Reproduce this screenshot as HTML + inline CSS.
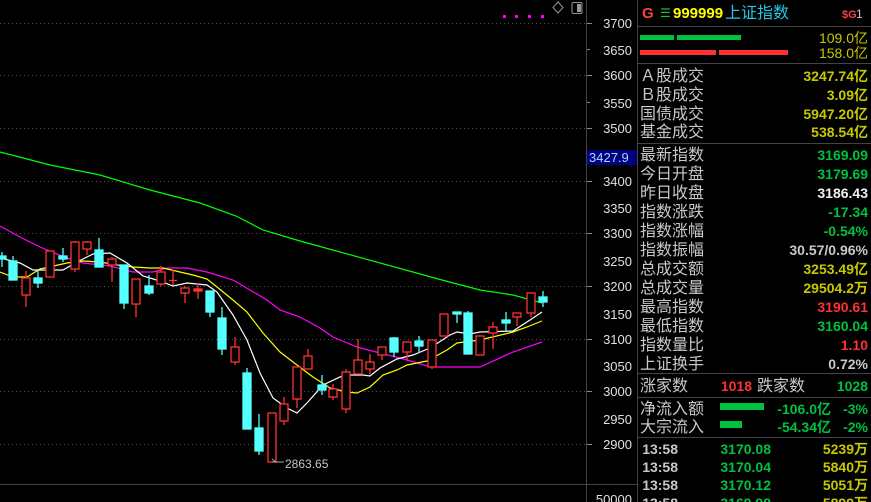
<!DOCTYPE html>
<html><head><meta charset="utf-8"><style>
html,body{margin:0;padding:0;background:#000;width:871px;height:502px;overflow:hidden}
svg{display:block}
text{font-family:"Liberation Sans","Noto Sans CJK SC",sans-serif}
.l{fill:#c8c8c8;font-size:16px}
.n{font-size:14px;font-weight:bold;text-anchor:end}
.ax{fill:#e0e0e0;font-size:13px;text-anchor:end}
</style></head><body>
<svg width="871" height="502" viewBox="0 0 871 502" xmlns="http://www.w3.org/2000/svg">
<rect width="871" height="502" fill="#000"/>
<!-- grid -->
<g stroke="#505050" stroke-dasharray="1 3" stroke-width="1">
<line x1="0" y1="23.5" x2="586" y2="23.5"/><line x1="0" y1="75.5" x2="586" y2="75.5"/>
<line x1="0" y1="128.5" x2="586" y2="128.5"/><line x1="0" y1="181.5" x2="586" y2="181.5"/>
<line x1="0" y1="233.5" x2="586" y2="233.5"/><line x1="0" y1="286.5" x2="586" y2="286.5"/>
<line x1="0" y1="339.5" x2="586" y2="339.5"/><line x1="0" y1="391.5" x2="586" y2="391.5"/>
<line x1="0" y1="444.5" x2="586" y2="444.5"/>
</g>
<g stroke="#444" stroke-width="1">
<line x1="586.5" y1="0" x2="586.5" y2="502"/>
<line x1="637.5" y1="0" x2="637.5" y2="502"/>
<line x1="0" y1="484.5" x2="637" y2="484.5"/>
<line x1="637" y1="26.5" x2="871" y2="26.5"/>
<line x1="637" y1="63.5" x2="871" y2="63.5"/>
<line x1="637" y1="143.5" x2="871" y2="143.5"/>
<line x1="637" y1="373.5" x2="871" y2="373.5"/>
<line x1="637" y1="397.5" x2="871" y2="397.5"/>
<line x1="637" y1="437.5" x2="871" y2="437.5"/>
</g>
<!-- axis ticks -->
<g stroke="#888"><line x1="587" y1="23.5" x2="592" y2="23.5"/><line x1="587" y1="49.5" x2="590" y2="49.5"/><line x1="587" y1="75.5" x2="592" y2="75.5"/><line x1="587" y1="102.5" x2="590" y2="102.5"/><line x1="587" y1="128.5" x2="592" y2="128.5"/><line x1="587" y1="181.5" x2="592" y2="181.5"/><line x1="587" y1="233.5" x2="592" y2="233.5"/><line x1="587" y1="286.5" x2="592" y2="286.5"/><line x1="587" y1="339.5" x2="592" y2="339.5"/><line x1="587" y1="391.5" x2="592" y2="391.5"/><line x1="587" y1="444.5" x2="592" y2="444.5"/></g>
<g class="ax">
<text x="632" y="28">3700</text><text x="632" y="55">3650</text><text x="632" y="80">3600</text><text x="632" y="108">3550</text><text x="632" y="133">3500</text>
<text x="632" y="186">3400</text><text x="632" y="213">3350</text><text x="632" y="238">3300</text><text x="632" y="266">3250</text><text x="632" y="291">3200</text><text x="632" y="319">3150</text><text x="632" y="344">3100</text><text x="632" y="371">3050</text><text x="632" y="396">3000</text><text x="632" y="424">2950</text><text x="632" y="449">2900</text><text x="632" y="504">50000</text>
</g>
<rect x="587" y="150" width="50" height="15" fill="#000080"/>
<text x="589" y="162" style="fill:#a0d8ff;font-size:13px">3427.9</text>
<!-- top icons -->
<g fill="#ff00ff"><rect x="503" y="15" width="3" height="3"/><rect x="515" y="15" width="3" height="3"/><rect x="528" y="15" width="3" height="3"/><rect x="541" y="15" width="3" height="3"/></g>
<path d="M558 2 L563 7.5 L558 13 L553 7.5 Z" fill="none" stroke="#999"/>
<rect x="572" y="2.5" width="10" height="11" rx="1.5" fill="none" stroke="#999"/><rect x="577" y="4" width="4" height="8" fill="#999"/>
<!-- MAs -->
<g fill="none" stroke-width="1.2">
<polyline stroke="#00ff00" points="0,152 50,165 100,175 150,190 200,203 236,216 263,230 300,241 442,280 480,290 513,295 542,303"/>
<polyline stroke="#ff00ff" points="0,226 20,237 40,247 67,258 83,263 110,266 133,272 153,272 167,268 187,268 207,272 233,280 267,300 280,310 300,317 320,328 333,337 357,347 380,353 407,360 427,366 437,367 480,367 513,352 542,342"/>
<polyline stroke="#ffff00" points="0,272 13,277 27,277 40,269 67,263 83,261 100,262 117,265 133,267 150,268 163,268 180,272 193,275 207,279 217,287 233,300 247,312 263,333 280,352 297,365 313,377 330,388 347,392 357,393 370,387 383,375 397,370 407,365 427,361 447,350 457,343 480,340 513,332 527,327 542,321"/>
<polyline stroke="#ffffff" points="0,258 20,263 33,270 63,270 77,262 93,254 110,253 127,263 143,276 160,281 173,286 187,283 207,285 217,292 233,315 247,340 260,373 273,398 287,408 297,413 307,403 323,385 340,377 347,375 363,375 370,376 380,368 397,359 413,355 430,348 450,335 457,332 470,334 480,332 513,331 530,320 542,312"/>
</g>
<!-- candles -->
<g stroke-width="1.3">
<g stroke="#54ffff" fill="#54ffff">
<line x1="2" y1="252" x2="2" y2="267"/><rect x="-2" y="256" width="8" height="3"/>
<line x1="13" y1="256" x2="13" y2="280"/><rect x="9" y="261" width="8" height="19"/>
<line x1="38" y1="271" x2="38" y2="288"/><rect x="34" y="278" width="8" height="5"/>
<line x1="63" y1="248" x2="63" y2="262"/><rect x="59" y="256" width="8" height="3"/>
<line x1="99" y1="238" x2="99" y2="267"/><rect x="95" y="250" width="8" height="17"/>
<line x1="124" y1="265" x2="124" y2="309"/><rect x="120" y="265" width="8" height="38"/>
<line x1="149" y1="275" x2="149" y2="295"/><rect x="145" y="286" width="8" height="7"/>
<line x1="210" y1="291" x2="210" y2="317"/><rect x="206" y="291" width="8" height="21"/>
<line x1="222" y1="307" x2="222" y2="355"/><rect x="218" y="318" width="8" height="31"/>
<line x1="247" y1="368" x2="247" y2="429"/><rect x="243" y="373" width="8" height="56"/>
<line x1="259" y1="414" x2="259" y2="455"/><rect x="255" y="428" width="8" height="23"/>
<line x1="322" y1="375" x2="322" y2="395"/><rect x="318" y="385" width="8" height="5"/>
<line x1="394" y1="337" x2="394" y2="357"/><rect x="390" y="338" width="8" height="14"/>
<line x1="419" y1="336" x2="419" y2="353"/><rect x="415" y="341" width="8" height="5"/>
<line x1="457" y1="312" x2="457" y2="323"/><rect x="453" y="312" width="8" height="2"/>
<line x1="468" y1="311" x2="468" y2="354"/><rect x="464" y="313" width="8" height="41"/>
<line x1="506" y1="312" x2="506" y2="332"/><rect x="502" y="320" width="8" height="3"/>
<line x1="543" y1="291" x2="543" y2="307"/><rect x="539" y="297" width="8" height="5"/>
</g>
<g stroke="#ff3232" fill="#000">
<line x1="26" y1="271" x2="26" y2="307"/><rect x="22" y="278" width="8" height="17"/>
<line x1="50" y1="251" x2="50" y2="277"/><rect x="46" y="251" width="8" height="26"/>
<line x1="75" y1="241" x2="75" y2="272"/><rect x="71" y="242" width="8" height="27"/>
<line x1="87" y1="241" x2="87" y2="255"/><rect x="83" y="242" width="8" height="7"/>
<line x1="112" y1="257" x2="112" y2="282"/><rect x="108" y="259" width="8" height="6"/>
<line x1="136" y1="279" x2="136" y2="317"/><rect x="132" y="279" width="8" height="25"/>
<line x1="161" y1="266" x2="161" y2="286"/><rect x="157" y="272" width="8" height="12"/>
<line x1="173" y1="270" x2="173" y2="285"/><line x1="169" y1="280.5" x2="177" y2="280.5"/>
<line x1="185" y1="286" x2="185" y2="303"/><rect x="181" y="288" width="8" height="5"/>
<line x1="198" y1="283" x2="198" y2="299"/><rect x="194" y="289" width="8" height="2" fill="#ff3232"/>
<line x1="235" y1="337" x2="235" y2="365"/><rect x="231" y="347" width="8" height="15"/>
<line x1="272" y1="413" x2="272" y2="462"/><rect x="268" y="413" width="8" height="49"/>
<line x1="284" y1="397" x2="284" y2="425"/><rect x="280" y="404" width="8" height="17"/>
<line x1="297" y1="367" x2="297" y2="408"/><rect x="293" y="367" width="8" height="32"/>
<line x1="308" y1="349" x2="308" y2="369"/><rect x="304" y="356" width="8" height="13"/>
<line x1="333" y1="384" x2="333" y2="400"/><rect x="329" y="389" width="8" height="8"/>
<line x1="346" y1="369" x2="346" y2="413"/><rect x="342" y="372" width="8" height="37"/>
<line x1="358" y1="339" x2="358" y2="374"/><rect x="354" y="360" width="8" height="14"/>
<line x1="370" y1="354" x2="370" y2="374"/><rect x="366" y="362" width="8" height="7"/>
<line x1="382" y1="347" x2="382" y2="360"/><rect x="378" y="347" width="8" height="8"/>
<line x1="407" y1="342" x2="407" y2="360"/><rect x="403" y="342" width="8" height="10"/>
<line x1="432" y1="340" x2="432" y2="369"/><rect x="428" y="340" width="8" height="27"/>
<line x1="444" y1="314" x2="444" y2="336"/><rect x="440" y="314" width="8" height="22"/>
<line x1="480" y1="336" x2="480" y2="355"/><rect x="476" y="336" width="8" height="19"/>
<line x1="493" y1="322" x2="493" y2="349"/><rect x="489" y="327" width="8" height="6"/>
<line x1="517" y1="313" x2="517" y2="326"/><rect x="513" y="313" width="8" height="4"/>
<line x1="531" y1="293" x2="531" y2="317"/><rect x="527" y="293" width="8" height="20"/>
</g>
</g>
<path d="M276 462 L272 459 M272 462 L284 462" stroke="#aaa" fill="none"/>
<text x="285" y="468" style="fill:#c8c8c8;font-size:12px">2863.65</text>
<!-- right panel header -->
<text x="642" y="18" style="fill:#ff4040;font-size:15px;font-weight:bold">G</text>
<text x="660" y="17" style="fill:#20c040;font-size:12px">☰</text>
<text x="673" y="18" style="fill:#ffff00;font-size:15px;font-weight:bold">999999</text>
<text x="725" y="18" style="fill:#20c8e0;font-size:16px">上证指数</text>
<text x="842" y="18" style="fill:#ff4040;font-size:11px;font-weight:bold">$G</text>
<text x="856" y="18" style="fill:#c8c8c8;font-size:12px">1</text>
<rect x="640" y="35" width="34" height="5" fill="#00c040"/><rect x="677" y="35" width="64" height="5" fill="#00c040"/>
<rect x="640" y="50" width="76" height="5" fill="#ff3232"/><rect x="719" y="50" width="69" height="5" fill="#ff3232"/>
<text x="868" y="43" style="fill:#c8c800;font-size:14px;text-anchor:end">109.0亿</text>
<text x="868" y="58" style="fill:#c8c800;font-size:14px;text-anchor:end">158.0亿</text>
<g class="l">
<text x="640" y="81">Ａ股成交</text><text x="640" y="100">Ｂ股成交</text><text x="640" y="119">国债成交</text><text x="640" y="137">基金成交</text>
<text x="640" y="160">最新指数</text><text x="640" y="179">今日开盘</text><text x="640" y="198">昨日收盘</text><text x="640" y="217">指数涨跌</text><text x="640" y="236">指数涨幅</text><text x="640" y="255">指数振幅</text><text x="640" y="274">总成交额</text><text x="640" y="293">总成交量</text><text x="640" y="312">最高指数</text><text x="640" y="331">最低指数</text><text x="640" y="350">指数量比</text><text x="640" y="369">上证换手</text>
<text x="640" y="391">涨家数</text><text x="757" y="391">跌家数</text>
<text x="640" y="414">净流入额</text><text x="640" y="432">大宗流入</text>
</g>
<g class="n">
<text x="868" y="81" fill="#c8c800">3247.74亿</text><text x="868" y="100" fill="#c8c800">3.09亿</text><text x="868" y="119" fill="#c8c800">5947.20亿</text><text x="868" y="137" fill="#c8c800">538.54亿</text>
<text x="868" y="160" fill="#00c040">3169.09</text><text x="868" y="179" fill="#00c040">3179.69</text><text x="868" y="198" fill="#f0f0f0">3186.43</text><text x="868" y="217" fill="#00c040">-17.34</text><text x="868" y="236" fill="#00c040">-0.54%</text><text x="868" y="255" fill="#c8c8c8">30.57/0.96%</text><text x="868" y="274" fill="#c8c800">3253.49亿</text><text x="868" y="293" fill="#c8c800">29504.2万</text><text x="868" y="312" fill="#ff3232">3190.61</text><text x="868" y="331" fill="#00c040">3160.04</text><text x="868" y="350" fill="#ff3232">1.10</text><text x="868" y="369" fill="#c8c8c8">0.72%</text>
<text x="752" y="391" fill="#ff3232">1018</text><text x="868" y="391" fill="#00c040">1028</text>
<text x="831" y="414" fill="#00c040">-106.0亿</text><text x="868" y="414" fill="#00c040">-3%</text>
<text x="831" y="432" fill="#00c040">-54.34亿</text><text x="868" y="432" fill="#00c040">-2%</text>
<text x="678" y="454" fill="#c8c8c8">13:58</text><text x="771" y="454" fill="#00c040">3170.08</text><text x="868" y="454" fill="#c8c800">5239万</text>
<text x="678" y="472" fill="#c8c8c8">13:58</text><text x="771" y="472" fill="#00c040">3170.04</text><text x="868" y="472" fill="#c8c800">5840万</text>
<text x="678" y="490" fill="#c8c8c8">13:58</text><text x="771" y="490" fill="#00c040">3170.12</text><text x="868" y="490" fill="#c8c800">5051万</text>
<text x="678" y="508" fill="#c8c8c8">13:58</text><text x="771" y="508" fill="#00c040">3169.98</text><text x="868" y="508" fill="#c8c800">5899万</text>
</g>
<rect x="720" y="403" width="44" height="7" fill="#00c040"/>
<rect x="720" y="421" width="22" height="7" fill="#00c040"/>
</svg>
</body></html>
